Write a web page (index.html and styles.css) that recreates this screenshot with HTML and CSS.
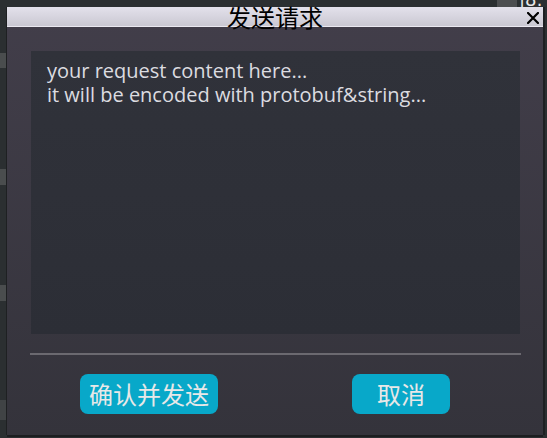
FILE: index.html
```html
<!DOCTYPE html>
<html lang="zh">
<head>
<meta charset="utf-8">
<link rel="stylesheet" href="styles.css">
</head>
<body>
<div class="bg-patch p1"></div>
<div class="bg-patch p2"></div>
<div class="bg-patch p3"></div>
<div class="bg-patch p4"></div>
<div class="bg-box"></div>
<div class="bg-glyph">|8:</div>
<div class="dialog">
  <div class="titlebar">
    <span class="title">发送请求</span>
    <svg class="close" width="12" height="12" viewBox="0 0 12 12"><path d="M1 1L11 11M11 1L1 11" stroke="#000" stroke-width="2.2" stroke-linecap="square"/></svg>
  </div>
  <div class="body">
    <div class="editor">your request content here...<br>it will be encoded with protobuf&amp;string...</div>
    <div class="sep"></div>
    <div class="actions">
      <button class="btn btn-confirm">确认并发送</button>
      <button class="btn btn-cancel">取消</button>
    </div>
  </div>
</div>
</body>
</html>
```
FILE: styles.css
```css
html, body {
  margin: 0;
  padding: 0;
}
body {
  width: 547px;
  height: 438px;
  overflow: hidden;
  background: #2b2f31;
  position: relative;
  padding: 7px 0 0 7px;
  box-sizing: border-box;
  font-family: "Open Sans", "Noto Sans CJK SC", sans-serif;
}
.bg-patch {
  position: absolute;
  left: 0;
  width: 6px;
  background: #4a4d4e;
}
.p1 { top: 53px; height: 15px; }
.p2 { top: 169px; height: 16px; }
.p3 { top: 285px; height: 16px; }
.p4 { top: 400px; height: 20px; background: #404345; }
.bg-box {
  position: absolute;
  left: 497px;
  top: 0;
  width: 20px;
  height: 7px;
  background: #4c4e50;
}
.bg-glyph {
  position: absolute;
  left: 519px;
  top: -10px;
  font-family: "DejaVu Sans", sans-serif;
  font-size: 18px;
  line-height: 20px;
  color: #e8e8e8;
}
.dialog {
  position: relative;
  width: 536px;
  height: 428px;
  display: flex;
  flex-direction: column;
  background: linear-gradient(#423e4a, #34333b);
  box-shadow: -1px 0 0 #1e2022, 0 2px 0 #1c1e20, 2px 0 0 #1e2022;
}
.titlebar {
  height: 19px;
  border-bottom: 1px solid #ebe9f1;
  background: linear-gradient(#e3e1eb, #cac8d2);
  display: flex;
  justify-content: center;
  position: relative;
}
.title {
  font-family: "Noto Sans CJK SC", sans-serif;
  font-size: 24px;
  line-height: 24px;
  margin-top: -2px;
  height: 24px;
  color: #000;
  position: relative;
  z-index: 1;
}
.close {
  position: absolute;
  right: 4px;
  top: 5px;
}
.body {
  display: flex;
  flex-direction: column;
  padding: 24px 23px 0 24px;
}
.editor {
  height: 283px;
  background: linear-gradient(#30323a, #2c2e36);
  box-sizing: border-box;
  padding: 8px 16px;
  color: #dcdce0;
  font-size: 20px;
  line-height: 24px;
}
.sep {
  height: 2px;
  margin: 19px -1px 0 -1px;
  background: #6b6970;
}
.actions {
  margin: 19px -7px 0 -8px;
  display: grid;
  grid-template-columns: 1fr 1fr;
  justify-items: center;
}
.btn {
  height: 40px;
  border: none;
  border-radius: 8px;
  background: #08a8c9;
  color: #e8e8e8;
  font-family: "Noto Sans CJK SC", sans-serif;
  font-size: 24px;
  line-height: 40px;
  padding: 0;
}
.btn-confirm { width: 138px; }
.btn-cancel { width: 98px; }
```
